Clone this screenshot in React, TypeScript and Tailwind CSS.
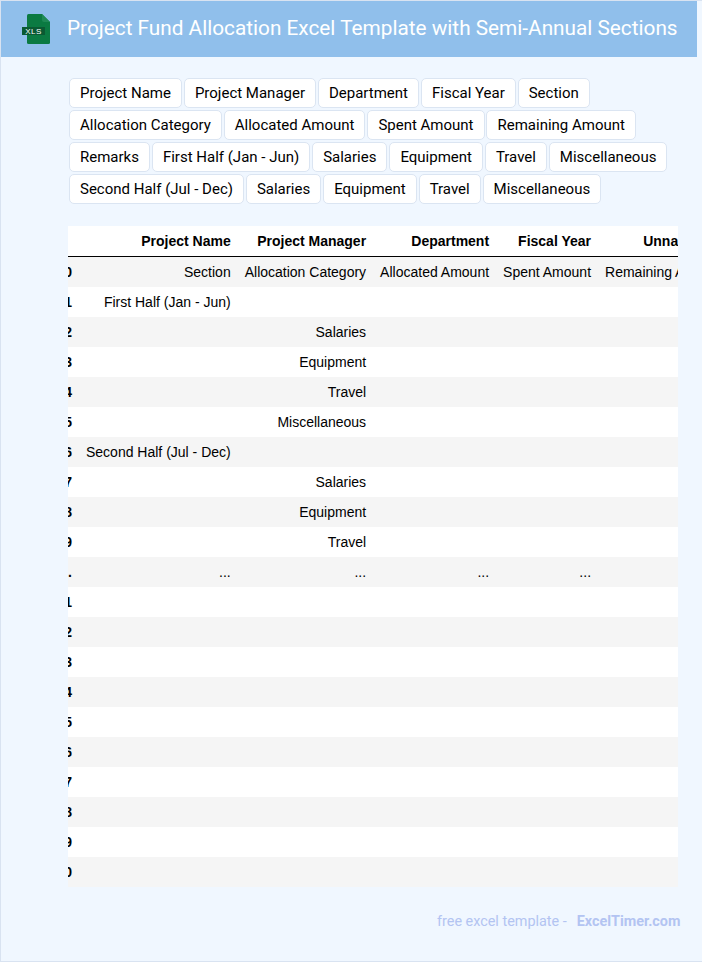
const tags = [
  "Project Name",
  "Project Manager",
  "Department",
  "Fiscal Year",
  "Section",
  "Allocation Category",
  "Allocated Amount",
  "Spent Amount",
  "Remaining Amount",
  "Remarks",
  "First Half (Jan - Jun)",
  "Salaries",
  "Equipment",
  "Travel",
  "Miscellaneous",
  "Second Half (Jul - Dec)",
  "Salaries",
  "Equipment",
  "Travel",
  "Miscellaneous",
];

const headers = ["", "Project Name", "Project Manager", "Department", "Fiscal Year", "Unnamed: 4"];

const rows: string[][] = [
  ["0", "Section", "Allocation Category", "Allocated Amount", "Spent Amount", "Remaining Amount"],
  ["1", "First Half (Jan - Jun)", "", "", "", ""],
  ["2", "", "Salaries", "", "", ""],
  ["3", "", "Equipment", "", "", ""],
  ["4", "", "Travel", "", "", ""],
  ["5", "", "Miscellaneous", "", "", ""],
  ["6", "Second Half (Jul - Dec)", "", "", "", ""],
  ["7", "", "Salaries", "", "", ""],
  ["8", "", "Equipment", "", "", ""],
  ["9", "", "Travel", "", "", ""],
  ["...", "...", "...", "...", "...", "..."],
  ["11", "", "", "", "", ""],
  ["12", "", "", "", "", ""],
  ["13", "", "", "", "", ""],
  ["14", "", "", "", "", ""],
  ["15", "", "", "", "", ""],
  ["16", "", "", "", "", ""],
  ["17", "", "", "", "", ""],
  ["18", "", "", "", "", ""],
  ["19", "", "", "", "", ""],
  ["20", "", "", "", "", ""],
];

function XlsIcon() {
  return (
    <svg width="30" height="32" viewBox="0 0 30 32" className="shrink-0">
      <path
        d="M6 2.5 Q6 1 7.5 1 H21 L29 9 V29.5 Q29 31 27.5 31 H7.5 Q6 31 6 29.5 Z"
        fill="#0b7a42"
      />
      <path d="M21 1 L29 9 H23 Q21 9 21 7 Z" fill="#1f8a55" />
      <rect x="1" y="14" width="23" height="8" fill="#0a5a33" />
      <text
        x="12.5"
        y="21"
        textAnchor="middle"
        fontSize="8"
        letterSpacing="0.4"
        fill="#ffffff"
        fontFamily="'Liberation Sans', sans-serif"
      >
        XLS
      </text>
    </svg>
  );
}

export default function App() {
  return (
    <div className="min-h-[962px] w-[702px] border border-[#d9e3f1] border-r-0 bg-[#f0f7ff] font-['Roboto',sans-serif]">
      <header className="flex h-[56px] w-[696px] items-center bg-[#90bfeb] pl-[20px]">
        <XlsIcon />
        <h1 className="ml-[16px] whitespace-nowrap text-[20.77px] font-normal text-white">
          Project Fund Allocation Excel Template with Semi-Annual Sections
        </h1>
      </header>

      <div className="ml-[67px] mt-[21px] flex w-[610px] flex-wrap gap-[1.95px] pl-px">
        {tags.map((tag, i) => (
          <span
            key={i}
            className="flex h-[30px] items-center rounded-[5px] border border-[#dbe5f2] bg-white px-[10px] text-[15px] text-black"
          >
            {tag}
          </span>
        ))}
      </div>

      <div className="ml-[67px] mt-[22px] w-[610px] overflow-hidden bg-white">
        <table className="ml-[-18.6px] whitespace-nowrap text-right font-['Liberation_Sans',Arial,sans-serif] text-[14px] text-black">
          <thead>
            <tr className="h-[31px] border-b border-black">
              {headers.map((h, i) => (
                <th key={i} className="px-[7px] font-bold">
                  {h}
                </th>
              ))}
            </tr>
          </thead>
          <tbody>
            {rows.map((row, r) => (
              <tr key={r} className={r % 2 === 0 ? "h-[30px] bg-[#f5f5f5]" : "h-[30px] bg-white"}>
                {row.map((cell, c) =>
                  c === 0 ? (
                    <th key={c} className="px-[7px] pt-px font-bold">
                      {cell}
                    </th>
                  ) : (
                    <td key={c} className="px-[7px] pt-px">
                      {cell}
                    </td>
                  ),
                )}
              </tr>
            ))}
          </tbody>
        </table>
      </div>

      <footer className="ml-[436px] mt-[24px] whitespace-nowrap text-[14.4px] text-[#b3c4f2]">
        free excel template -<span className="ml-[10px] font-bold">ExcelTimer.com</span>
      </footer>
    </div>
  );
}
